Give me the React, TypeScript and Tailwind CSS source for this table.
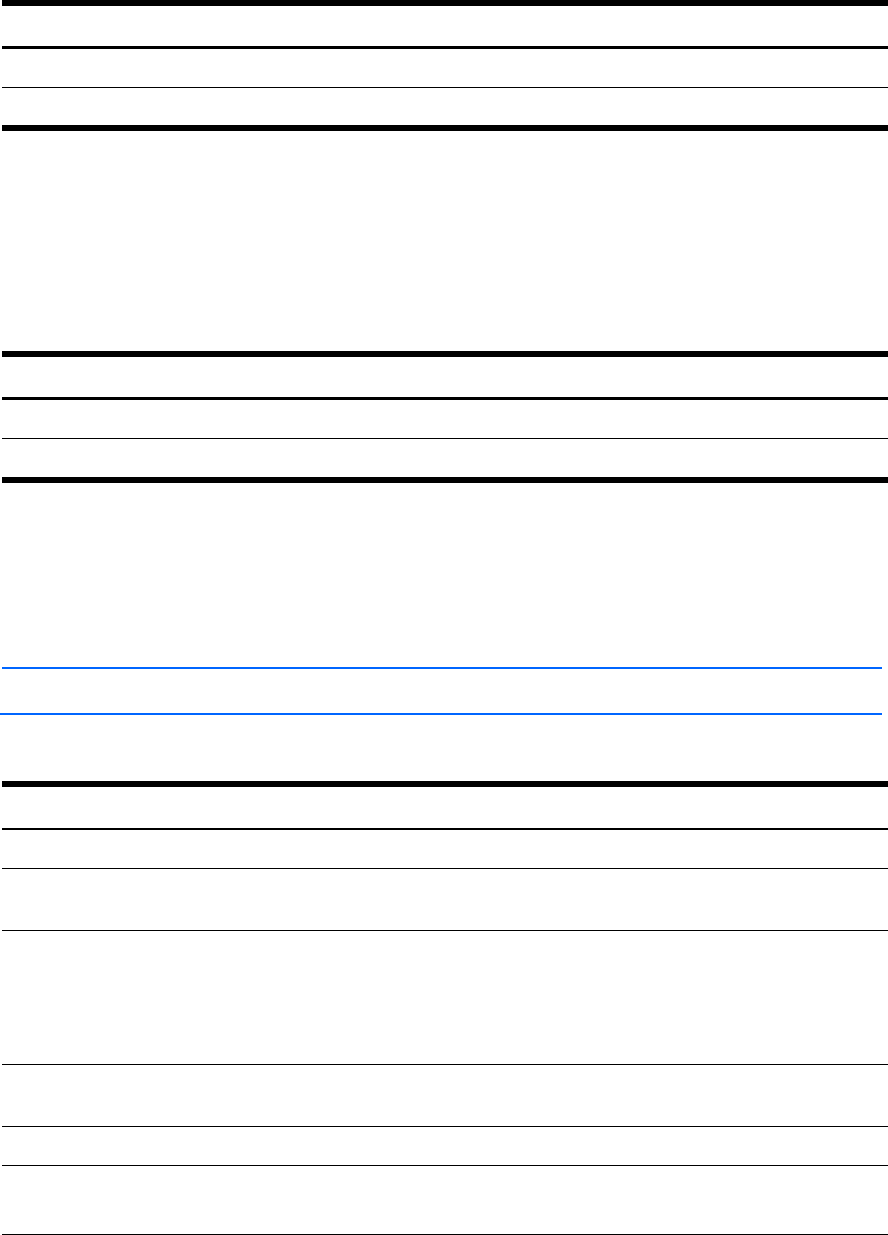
export default function App() {
  return (
    <div className="w-[888px] min-h-[1235px] bg-white overflow-hidden">
      {/* Table 1 */}
      <div className="ml-[2px]">
        <div className="h-[6px] bg-black" />
        <div className="h-[40px]" />
        <div className="h-[3px] bg-black" />
        <div className="h-[38px]" />
        <div className="h-px bg-black" />
        <div className="h-[37px]" />
        <div className="h-[6px] bg-black" />
      </div>

      <div className="h-[220px]" />

      {/* Table 2 */}
      <div className="ml-[2px]">
        <div className="h-[6px] bg-black" />
        <div className="h-[40px]" />
        <div className="h-[3px] bg-black" />
        <div className="h-[38px]" />
        <div className="h-px bg-black" />
        <div className="h-[38px]" />
        <div className="h-[6px] bg-black" />
      </div>

      <div className="h-[184px]" />

      {/* Blue bar */}
      <div className="w-[882px]">
        <div className="ml-[2px] h-[2px] bg-[#0066ff]" />
        <div className="h-[44px]" />
        <div className="h-[2px] bg-[#0066ff]" />
      </div>

      <div className="h-[66px]" />

      {/* Table 3 */}
      <div className="ml-[2px]">
        <div className="h-[6px] bg-black" />
        <div className="h-[41px]" />
        <div className="h-[2px] bg-black" />
        <div className="h-[38px]" />
        <div className="h-px bg-black" />
        <div className="h-[61px]" />
        <div className="h-px bg-black" />
        <div className="h-[133px]" />
        <div className="h-px bg-black" />
        <div className="h-[61px]" />
        <div className="h-px bg-black" />
        <div className="h-[38px]" />
        <div className="h-px bg-black" />
        <div className="h-[68px]" />
        <div className="h-px bg-black" />
      </div>
    </div>
  );
}
